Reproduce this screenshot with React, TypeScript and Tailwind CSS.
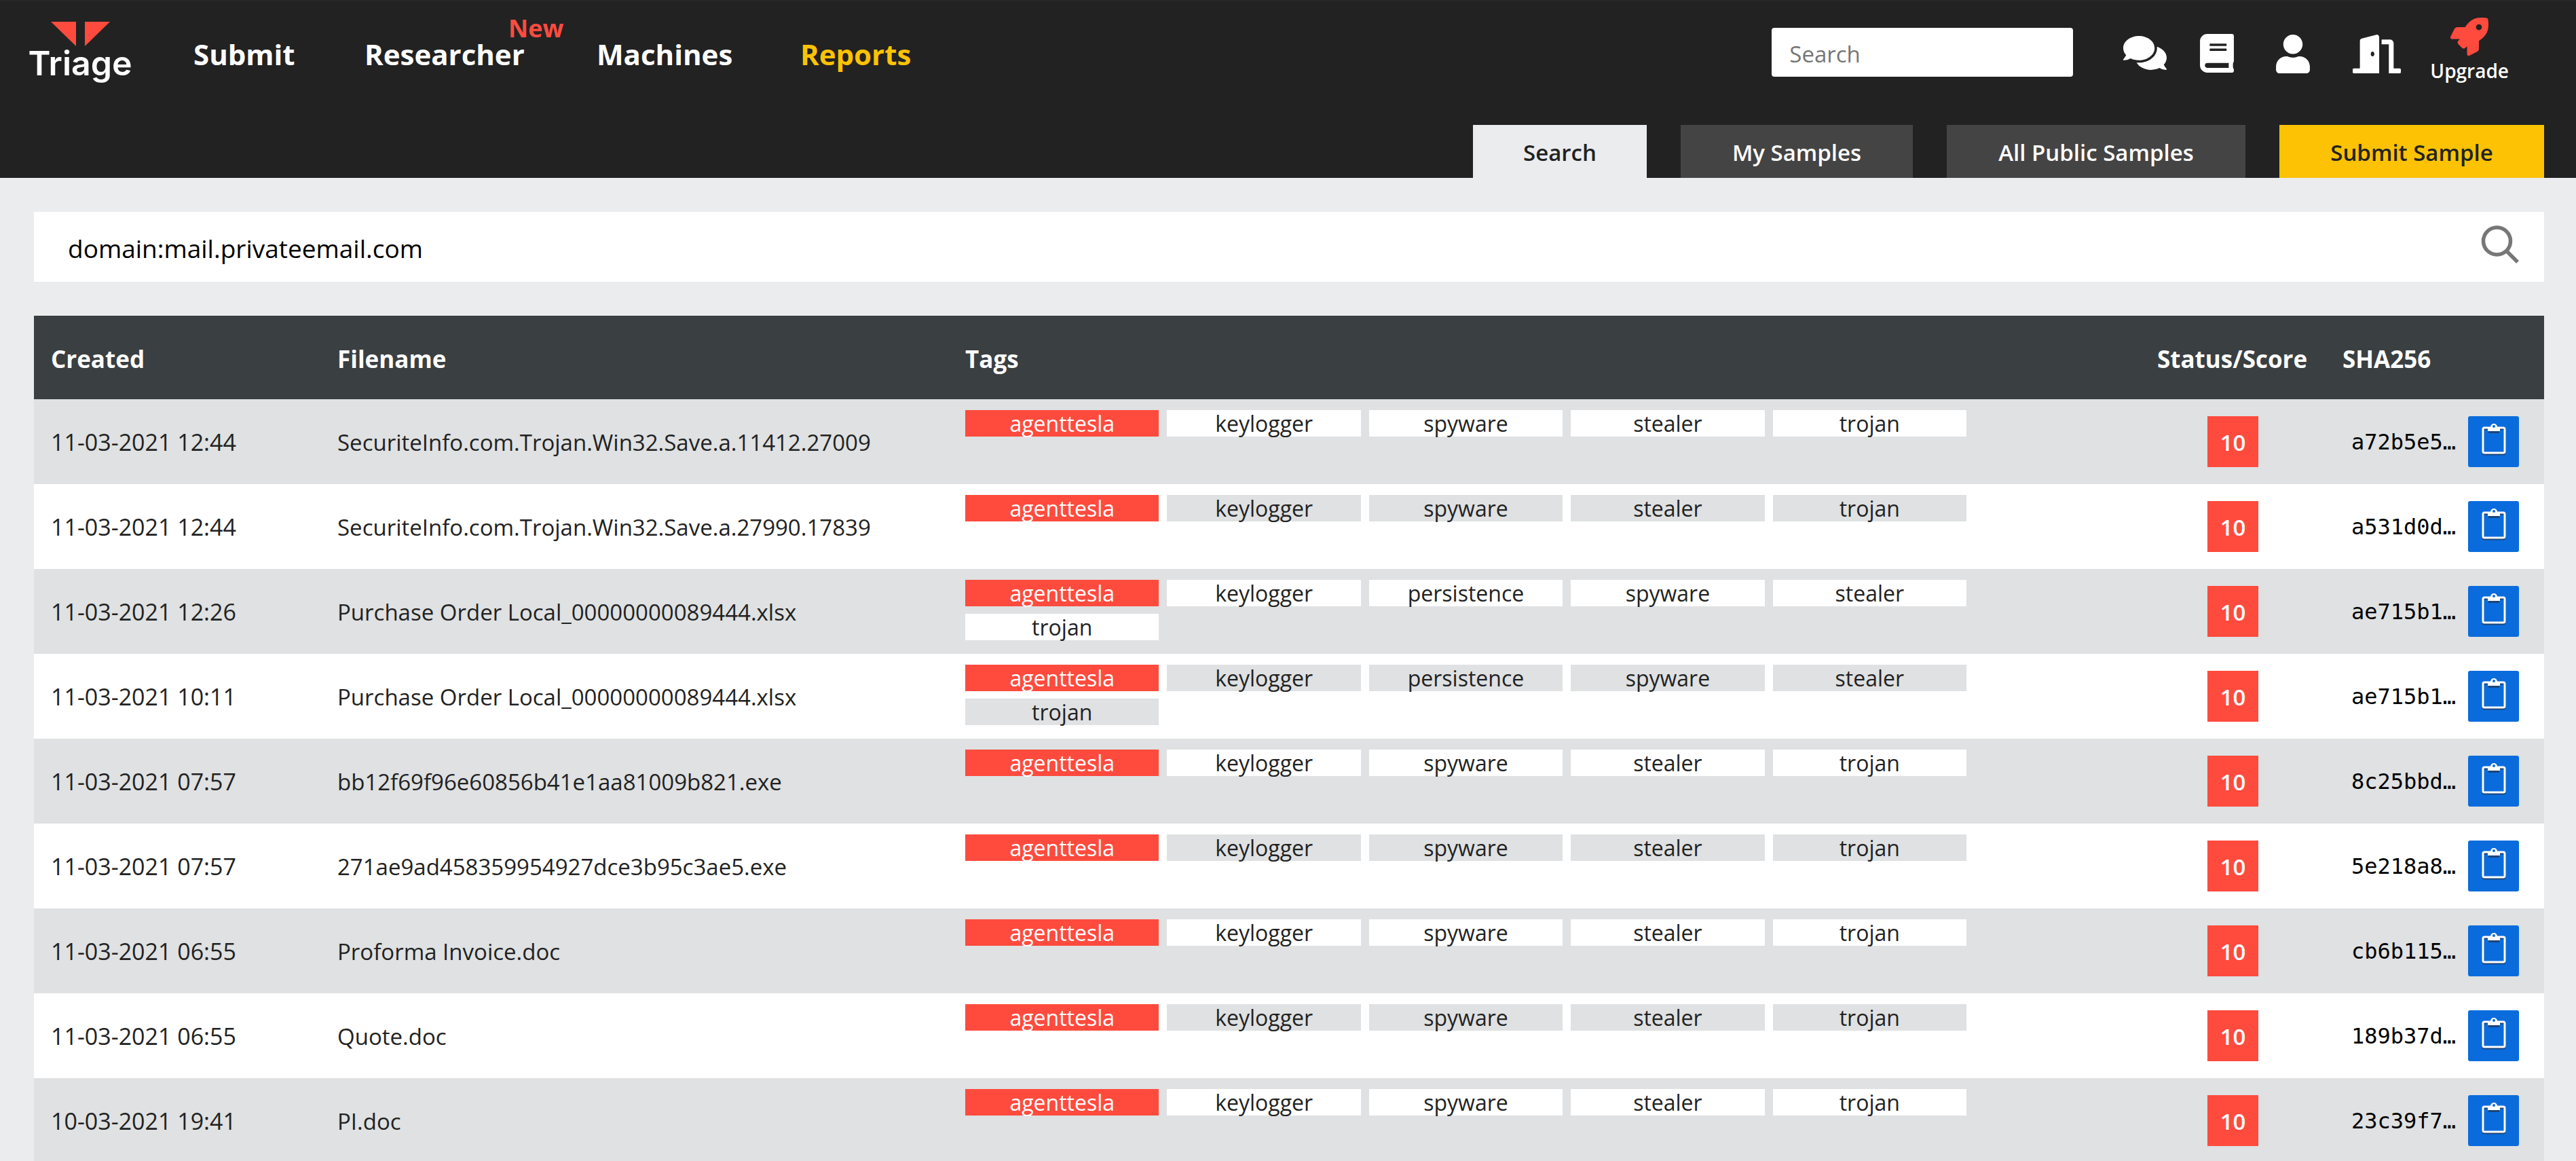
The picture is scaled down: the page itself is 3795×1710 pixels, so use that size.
import { FaBook, FaComments, FaDoorOpen, FaRocket, FaUser } from "react-icons/fa";

type Sample = { created: string; filename: string; tags: string[]; score: number; sha: string };

const basic = ["agenttesla", "keylogger", "spyware", "stealer", "trojan"];
const persistent = ["agenttesla", "keylogger", "persistence", "spyware", "stealer", "trojan"];

const samples: Sample[] = [
  { created: "11-03-2021 12:44", filename: "SecuriteInfo.com.Trojan.Win32.Save.a.11412.27009", tags: basic, score: 10, sha: "a72b5e5…" },
  { created: "11-03-2021 12:44", filename: "SecuriteInfo.com.Trojan.Win32.Save.a.27990.17839", tags: basic, score: 10, sha: "a531d0d…" },
  { created: "11-03-2021 12:26", filename: "Purchase Order Local_00000000089444.xlsx", tags: persistent, score: 10, sha: "ae715b1…" },
  { created: "11-03-2021 10:11", filename: "Purchase Order Local_00000000089444.xlsx", tags: persistent, score: 10, sha: "ae715b1…" },
  { created: "11-03-2021 07:57", filename: "bb12f69f96e60856b41e1aa81009b821.exe", tags: basic, score: 10, sha: "8c25bbd…" },
  { created: "11-03-2021 07:57", filename: "271ae9ad458359954927dce3b95c3ae5.exe", tags: basic, score: 10, sha: "5e218a8…" },
  { created: "11-03-2021 06:55", filename: "Proforma Invoice.doc", tags: basic, score: 10, sha: "cb6b115…" },
  { created: "11-03-2021 06:55", filename: "Quote.doc", tags: basic, score: 10, sha: "189b37d…" },
  { created: "10-03-2021 19:41", filename: "PI.doc", tags: basic, score: 10, sha: "23c39f7…" },
];

function Logo() {
  return (
    <a href="#" className="flex w-[152px] shrink-0 flex-col items-center text-white">
      <svg viewBox="0 0 87 36" className="h-9 w-[87px]" fill="#ff4b3e" aria-hidden="true">
        <path d="M0 0H37V36Z" />
        <path d="M87 0H50V36Z" />
      </svg>
      <span className="font-['Inter',sans-serif] text-[50px] leading-[50px] font-semibold">Triage</span>
    </a>
  );
}

function ClipboardIcon() {
  return (
    <svg viewBox="0 0 36 50" className="h-[50px] w-9" aria-hidden="true">
      <g fill="none" stroke="#1c4479" strokeWidth="3" transform="translate(0 2)">
        <rect x="2" y="8" width="32" height="37" rx="2" />
        <path d="M10 11H26" strokeWidth="6" />
      </g>
      <rect x="2" y="8" width="32" height="37" rx="2" fill="none" stroke="#fff" strokeWidth="3" />
      <path d="M9 7H13A5 5 0 0 1 23 7H27V13H9Z" fill="#fff" />
      <circle cx="18" cy="6" r="2" fill="#0a6cdc" />
    </svg>
  );
}

function Header() {
  return (
    <header className="flex h-[262px] flex-col justify-between border-t-2 border-[#272727] bg-[#222] text-white">
      <div className="flex items-start justify-between pr-[99px] pl-[42px]">
        <div className="flex pt-[30px]">
          <Logo />
          <nav className="ml-[91px] flex pt-5 text-[42px] leading-[56px] font-bold">
            <a href="#" className="w-[252px]">Submit</a>
            <a href="#" className="relative w-[342px]">
              Researcher
              <span className="absolute -top-[30px] left-[212px] text-[36px] leading-[40px] text-[#ff4b3e]">New</span>
            </a>
            <a href="#" className="w-[300px]">Machines</a>
            <a href="#" className="text-[#fcc203]">Reports</a>
          </nav>
        </div>
        <div className="flex items-start">
          <input
            type="search"
            aria-label="Search"
            placeholder="Search"
            className="mt-[39px] mr-[74px] h-[72px] w-[444px] rounded bg-white px-[26px] pt-1 text-[33px] text-[#222] placeholder:text-[#767676]"
          />
          <div className="mt-[47px] flex items-center gap-[49px]">
            <a href="#" aria-label="Chat"><FaComments className="h-[58px] w-16" /></a>
            <a href="#" aria-label="Documentation"><FaBook className="h-[57px] w-[50px]" /></a>
          </div>
          <div className="mt-[49px] ml-[62px] flex items-center gap-[63px]">
            <a href="#" aria-label="Account"><FaUser className="h-[57px] w-[50px]" /></a>
            <a href="#" aria-label="Sign out"><FaDoorOpen className="h-[57px] w-[71px]" /></a>
          </div>
          <a href="#" className="mt-6 ml-[43px] flex flex-col items-center text-[28px] leading-[44px] font-semibold">
            <FaRocket className="size-14 text-[#ff4b3e]" />
            Upgrade
          </a>
        </div>
      </div>
      <nav className="flex justify-end gap-[50px] pr-[47px] text-[33px] leading-[82px] font-semibold">
        <a href="#" className="h-[78px] w-[256px] bg-[#ebecee] text-center text-[#222]">Search</a>
        <a href="#" className="h-[78px] w-[342px] bg-[#444] text-center">My Samples</a>
        <a href="#" className="h-[78px] w-[440px] bg-[#444] text-center">All Public Samples</a>
        <a href="#" className="h-[78px] w-[390px] bg-[#fcc203] text-center text-[#222]">Submit Sample</a>
      </nav>
    </header>
  );
}

function SampleRow({ sample }: { sample: Sample }) {
  return (
    <tr className="group h-[125px] odd:bg-[#dfe1e2] even:bg-white">
      <td className="pt-0.5 pl-[25px] text-[34px]">{sample.created}</td>
      <td className="pt-0.5 pl-[25px]">{sample.filename}</td>
      <td className="pt-4 pl-[25px] align-top text-[32px]">
        <ul className="grid w-[1475px] grid-cols-5 gap-x-3 gap-y-[11px] text-center leading-[39px]">
          {sample.tags.map((tag, i) => (
            <li
              key={tag}
              className={
                i === 0
                  ? "h-[39px] bg-[#ff4b3e] text-white"
                  : "h-[39px] group-odd:bg-white group-even:bg-[#dfe1e2]"
              }
            >
              {tag}
            </li>
          ))}
        </ul>
      </td>
      <td>
        <div className="mx-auto size-[75px] bg-[#ff4b3e] text-center leading-[78px] font-semibold text-white">{sample.score}</div>
      </td>
      <td>
        <div className="flex items-center justify-end gap-[18px] pr-[37px]">
          <span className="font-['DejaVu_Sans_Mono',monospace] text-[32px] text-black">{sample.sha}</span>
          <button type="button" aria-label="Copy SHA256" className="flex size-[75px] justify-center rounded-[3px] bg-[#0a6cdc] pt-[9px]">
            <ClipboardIcon />
          </button>
        </div>
      </td>
    </tr>
  );
}

export default function App() {
  return (
    <div className="h-screen overflow-hidden bg-[#ebecee] font-['Open_Sans',sans-serif] text-[33px] text-[#222]">
      <Header />
      <main className="flex flex-col gap-[50px] pt-[50px] pr-[47px] pl-[50px]">
        <form className="flex h-[103px] items-start justify-between bg-white pr-9 pl-[50px]">
          <input
            type="text"
            aria-label="Query"
            defaultValue="domain:mail.privateemail.com"
            className="h-full grow pt-1 text-[37px] text-black outline-none"
          />
          <button type="submit" aria-label="Search" className="mt-5">
            <svg viewBox="0 0 57 57" className="size-[57px]" fill="none" stroke="#777" strokeWidth="5.5" aria-hidden="true">
              <circle cx="23.5" cy="23" r="20" />
              <path d="M38 38L54 54" />
            </svg>
          </button>
        </form>
        <table className="w-full table-fixed border-collapse text-left">
          <colgroup>
            <col className="w-[422px]" />
            <col className="w-[925px]" />
            <col />
            <col className="w-[273px]" />
            <col className="w-[322px]" />
          </colgroup>
          <thead>
            <tr className="h-[123px] bg-[#3a3f42] text-[35px] text-white">
              <th className="pt-1.5 pl-[25px]">Created</th>
              <th className="pt-1.5 pl-[25px]">Filename</th>
              <th className="pt-1.5 pl-[25px]">Tags</th>
              <th className="pt-1.5 pl-[25px]">Status/Score</th>
              <th className="pt-1.5 pl-[25px]">SHA256</th>
            </tr>
          </thead>
          <tbody>
            {samples.map((sample, i) => (
              <SampleRow key={i} sample={sample} />
            ))}
          </tbody>
        </table>
      </main>
    </div>
  );
}
